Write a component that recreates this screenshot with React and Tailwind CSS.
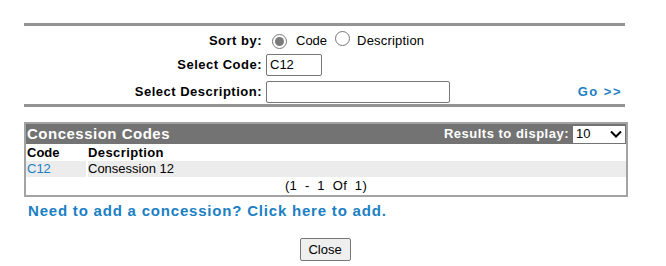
import React from 'react';

const font = { fontFamily: '"Liberation Sans", Arial, sans-serif' };

function Radio({ checked }) {
  return (
    <span className="inline-flex items-center justify-center w-[15px] h-[15px] rounded-full border border-[#767676] bg-white">
      {checked && <span className="w-[9px] h-[9px] rounded-full bg-[#7a7a7a]"></span>}
    </span>
  );
}

function SearchForm() {
  return (
    <div className="text-[13px] text-black">
      <div className="h-[3px] bg-[#939393]"></div>
      <div className="grid grid-cols-[238px_1fr_auto] gap-x-[4px] items-center pt-[4px]">
        <div className="text-right font-bold tracking-[0.5px] h-[22px] leading-[22px]">Sort by:</div>
        <div className="flex items-center h-[22px] pl-[6px]">
          <Radio checked />
          <span className="ml-[9px]">Code</span>
          <span className="ml-[8px]"><Radio /></span>
          <span className="ml-[7px] tracking-[0.2px]">Description</span>
        </div>
        <div></div>

        <div className="text-right font-bold tracking-[0.5px] mt-[2px]">Select Code:</div>
        <div className="mt-[2px]">
          <div className="w-[56px] h-[22px] border border-[#767676] rounded-[2px] px-[3px] leading-[20px] bg-white">C12</div>
        </div>
        <div></div>

        <div className="text-right font-bold tracking-[0.5px] mt-[5px]">Select Description:</div>
        <div className="mt-[5px]">
          <div className="w-[184px] h-[22px] border border-[#767676] rounded-[2px] bg-white"></div>
        </div>
        <div className="mt-[5px] pr-[3px] font-bold tracking-[1.5px] text-[#1b80c3]">Go &gt;&gt;</div>
      </div>
      <div className="h-[3px] bg-[#939393] mt-[1px]"></div>
    </div>
  );
}

function ResultsTable() {
  return (
    <div className="mt-[15px] border-2 border-[#a3a3a3] w-[604px] text-[13px]">
      <div className="flex items-center justify-between bg-[#737373] h-[20px] pl-[1px] pr-[1px]">
        <span className="text-white font-bold text-[15px] tracking-[0.5px]">Concession Codes</span>
        <div className="flex items-center">
          <span className="text-white font-bold tracking-[0.5px] mr-[4px]">Results to display:</span>
          <div className="flex items-center justify-between w-[52px] h-[17px] bg-white px-[3px]">
            <span className="text-black">10</span>
            <svg width="12" height="8" viewBox="0 0 12 8" fill="none" stroke="black" strokeWidth="2">
              <path d="M1 1.5l5 5 5-5" />
            </svg>
          </div>
        </div>
      </div>
      <div className="flex font-bold h-[17px] leading-[17px]">
        <span className="w-[62px] pl-[1px]">Code</span>
        <span className="tracking-[0.4px]">Description</span>
      </div>
      <div className="flex h-[16px] leading-[16px] gap-[2px]">
        <span className="w-[60px] pl-[1px] bg-[#ececec] text-[#1b80c3]">C12</span>
        <span className="flex-1 bg-[#ececec]">Consession 12</span>
      </div>
      <div className="text-center h-[18px] leading-[18px] whitespace-pre tracking-[0.3px]">(1  -  1  Of  1)</div>
    </div>
  );
}

export default function App() {
  return (
    <div className="w-[666px] h-[266px] bg-white overflow-hidden" style={font}>
      <div className="pt-[23px] pl-[24px] w-[625px]">
        <SearchForm />
        <ResultsTable />
        <div className="mt-[5px] pl-[4px] text-[15px] font-bold tracking-[0.8px] leading-[18px] text-[#1b80c3]">
          Need to add a concession? Click here to add.
        </div>
        <div className="flex justify-center mt-[18px] w-[602px]">
          <button className="w-[51px] h-[23px] border border-[#767676] rounded-[2px] bg-[#efefef] text-[13px] text-black">
            Close
          </button>
        </div>
      </div>
    </div>
  );
}
